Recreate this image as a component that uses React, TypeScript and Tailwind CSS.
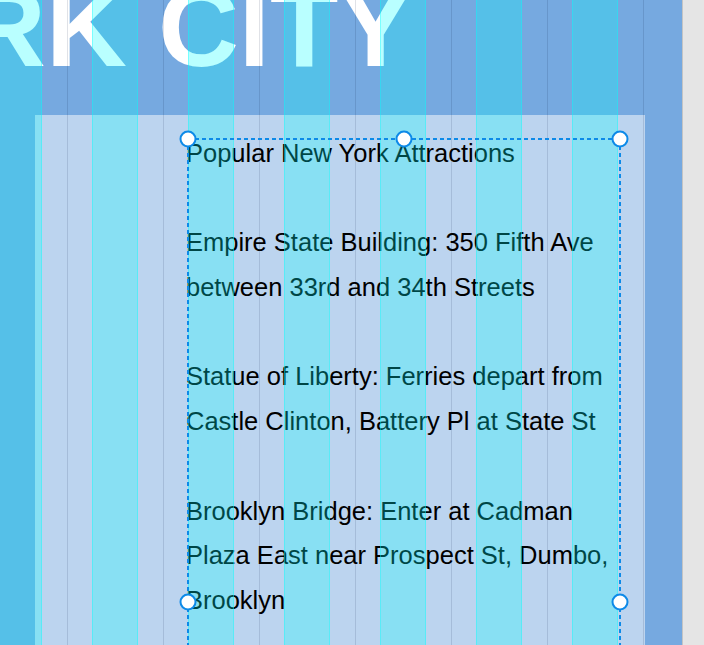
import React from "react";

const lines = [
  "Popular New York Attractions",
  "",
  "Empire State Building: 350 Fifth Ave",
  "between 33rd and 34th Streets",
  "",
  "Statue of Liberty: Ferries depart from",
  "Castle Clinton, Battery Pl at State St",
  "",
  "Brooklyn Bridge: Enter at Cadman",
  "Plaza East near Prospect St, Dumbo,",
  "Brooklyn",
];

const SEL = "#0d8ae8";

export default function App() {
  const cols = Array.from({ length: 7 });
  return (
    <div className="relative flex h-[645px] w-[704px] overflow-hidden bg-[#e5e5e5] font-['Liberation_Sans',Arial,sans-serif]">
      <div className="relative flex h-full w-[683px] shrink-0 flex-col overflow-hidden border-r border-[#c4c4c4] bg-[#76a9e0]">
        <div className="h-[115px] shrink-0 overflow-hidden">
          <div className="-ml-[35px] -mt-[28px] whitespace-nowrap text-[112px] font-bold leading-[112px] text-white">
            RK CITY
          </div>
        </div>
        <div className="ml-[35px] w-[610px] flex-1 bg-[#bcd4ef]">
          <div className="ml-[151px] mt-[15.5px] text-[25.5px] leading-[44.75px] text-black">
            {lines.map((l, i) => (
              <div key={i} className="h-[44.75px] whitespace-nowrap">
                {l}
              </div>
            ))}
          </div>
        </div>

        {/* column grid overlay */}
        <div className="pointer-events-none absolute inset-y-0 left-[-4px] right-0 flex">
          {cols.map((_, i) => (
            <React.Fragment key={i}>
              <div className="h-full w-[46px] shrink-0 border-x border-[rgba(0,255,255,0.35)] bg-[rgba(0,255,255,0.275)]" />
              <div className="flex h-full w-[50px] shrink-0 justify-center">
                <div className="h-full w-px bg-[rgba(0,20,60,0.12)]" />
              </div>
            </React.Fragment>
          ))}
        </div>

        {/* selection box */}
        <svg
          className="pointer-events-none absolute left-0 top-0"
          width="682"
          height="645"
          viewBox="0 0 682 645"
        >
          <g stroke={SEL} strokeWidth="2" strokeDasharray="4 3" fill="none">
            <line x1="188" y1="139" x2="620" y2="139" />
            <line x1="188" y1="139" x2="188" y2="645" />
            <line x1="620" y1="139" x2="620" y2="645" />
          </g>
          <g fill="#ffffff" stroke={SEL} strokeWidth="2">
            <circle cx="188" cy="139" r="7.5" />
            <circle cx="404" cy="139" r="7.5" />
            <circle cx="620" cy="139" r="7.5" />
            <circle cx="188" cy="602" r="7.5" />
            <circle cx="620" cy="602" r="7.5" />
          </g>
        </svg>
      </div>
    </div>
  );
}
